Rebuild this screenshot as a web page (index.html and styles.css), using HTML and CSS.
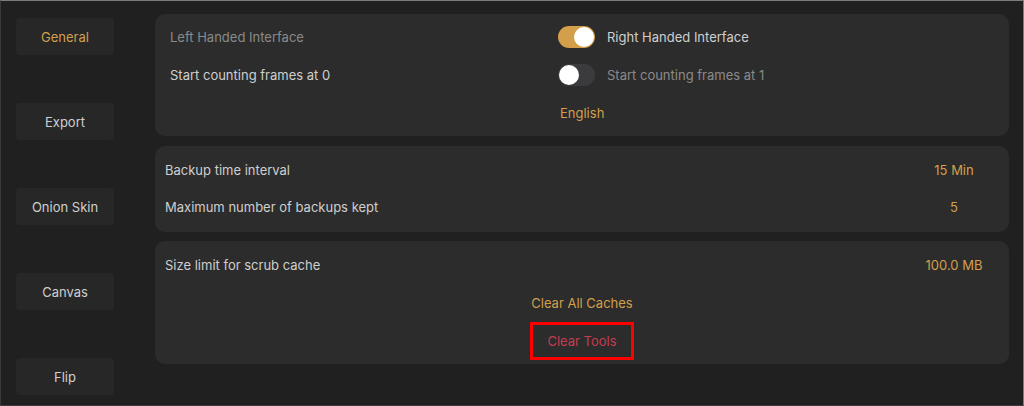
FILE: index.html
```html
<!DOCTYPE html>
<html lang="en">
<head>
	<title>Settings</title>
	<meta http-equiv="content-type" content="text/html; charset=utf-8" />
	<link rel="stylesheet" href="styles.css">
</head>
<body>
	<div class="app">
		<div class="sidebar">
			<div class="tab active">General</div>
			<div class="tab">Export</div>
			<div class="tab">Onion Skin</div>
			<div class="tab">Canvas</div>
			<div class="tab">Flip</div>
		</div>
		<div class="main">
			<div class="card card-general">
				<div class="row">
					<div class="left dim">Left Handed Interface</div>
					<div class="right"><span class="toggle on"><span class="knob"></span></span><span>Right Handed Interface</span></div>
				</div>
				<div class="row">
					<div class="left">Start counting frames at 0</div>
					<div class="right"><span class="toggle"><span class="knob"></span></span><span class="dim">Start counting frames at 1</span></div>
				</div>
				<div class="row">
					<div class="left"></div>
					<div class="right gold lang">English</div>
				</div>
			</div>
			<div class="card card-backup">
				<div class="row">
					<div class="label">Backup time interval</div>
					<div class="value gold">15 Min</div>
				</div>
				<div class="row">
					<div class="label">Maximum number of backups kept</div>
					<div class="value gold">5</div>
				</div>
			</div>
			<div class="card card-cache">
				<div class="row">
					<div class="label">Size limit for scrub cache</div>
					<div class="value gold">100.0 MB</div>
				</div>
				<div class="row center">
					<span class="gold">Clear All Caches</span>
				</div>
				<div class="row center">
					<span class="clear-tools">Clear Tools</span>
				</div>
			</div>
		</div>
	</div>
</body>
</html>
```

FILE: styles.css
```css
html, body { margin: 0; padding: 0; }
body { font-family: Inter, "Open Sans", sans-serif; font-size: 13px; color: #cfcfcf; background-color: #202020; }
.app { display: flex; box-sizing: border-box; width: 1024px; height: 406px; border: 1px solid #7c7c7c; border-left-color: #3a3a3a; border-bottom-color: #3a3a3a; background-color: #202020; }
.sidebar { width: 139px; flex: none; display: flex; flex-direction: column; gap: 48px; padding: 17px 0 0 15px; box-sizing: border-box; }
.tab { width: 98px; height: 37px; display: flex; align-items: center; justify-content: center; background-color: #272727; border-radius: 4px; color: #cfcfcf; }
.tab.active { color: #d39f4b; }
.main { flex: 1; display: flex; flex-direction: column; gap: 9px; padding: 13px 14px 0 15px; }
.card { background-color: #2c2c2c; border-radius: 10px; }
.card-general { padding: 4px 0; margin-bottom: 1px; }
.card-backup { padding: 5px 0 7px; }
.card-backup .row { height: 37px; }
.card-cache { padding: 5px 0 4px; }
.row { display: flex; align-items: center; height: 38px; }
.left { width: 388px; padding-left: 15px; }
.right { display: flex; align-items: center; gap: 12px; }
.lang { padding-left: 2px; }
.dim { color: #8a8a8a; }
.gold { color: #d39f4b; }
.label { flex: 1; padding-left: 10px; }
.value { width: 80px; margin-right: 15px; text-align: center; }
.center { justify-content: center; }
.toggle { position: relative; display: inline-block; width: 37px; height: 22px; border-radius: 11px; background-color: #3b3b3d; }
.toggle.on { background-color: #d39f4b; }
.knob { position: absolute; top: 1px; left: 1px; width: 20px; height: 20px; border-radius: 50%; background-color: #fff; }
.toggle.on .knob { left: 16px; }
.clear-tools { box-sizing: border-box; width: 104px; height: 38px; display: flex; align-items: center; justify-content: center; border: 3px solid #ff0000; color: #c53c52; }
```
